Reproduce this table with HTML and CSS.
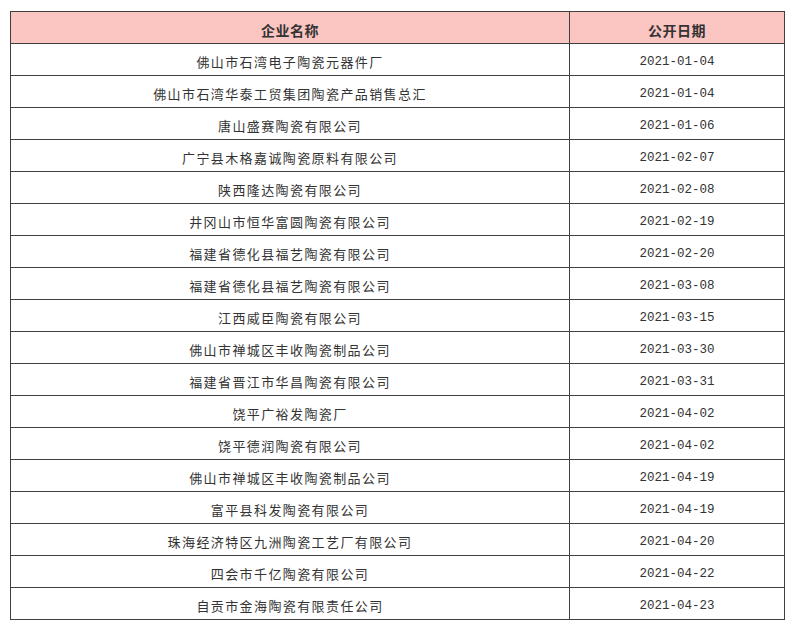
FILE: index.html
```html
<!DOCTYPE html>
<html lang="zh">
<head>
<meta charset="utf-8">
<link rel="stylesheet" href="styles.css">
</head>
<body>
<table class="list">
  <thead>
    <tr><th class="name">企业名称</th><th class="date">公开日期</th></tr>
  </thead>
  <tbody>
    <tr><td class="name">佛山市石湾电子陶瓷元器件厂</td><td class="date">2021-01-04</td></tr>
    <tr><td class="name">佛山市石湾华泰工贸集团陶瓷产品销售总汇</td><td class="date">2021-01-04</td></tr>
    <tr><td class="name">唐山盛赛陶瓷有限公司</td><td class="date">2021-01-06</td></tr>
    <tr><td class="name">广宁县木格嘉诚陶瓷原料有限公司</td><td class="date">2021-02-07</td></tr>
    <tr><td class="name">陕西隆达陶瓷有限公司</td><td class="date">2021-02-08</td></tr>
    <tr><td class="name">井冈山市恒华富圆陶瓷有限公司</td><td class="date">2021-02-19</td></tr>
    <tr><td class="name">福建省德化县福艺陶瓷有限公司</td><td class="date">2021-02-20</td></tr>
    <tr><td class="name">福建省德化县福艺陶瓷有限公司</td><td class="date">2021-03-08</td></tr>
    <tr><td class="name">江西威臣陶瓷有限公司</td><td class="date">2021-03-15</td></tr>
    <tr><td class="name">佛山市禅城区丰收陶瓷制品公司</td><td class="date">2021-03-30</td></tr>
    <tr><td class="name">福建省晋江市华昌陶瓷有限公司</td><td class="date">2021-03-31</td></tr>
    <tr><td class="name">饶平广裕发陶瓷厂</td><td class="date">2021-04-02</td></tr>
    <tr><td class="name">饶平德润陶瓷有限公司</td><td class="date">2021-04-02</td></tr>
    <tr><td class="name">佛山市禅城区丰收陶瓷制品公司</td><td class="date">2021-04-19</td></tr>
    <tr><td class="name">富平县科发陶瓷有限公司</td><td class="date">2021-04-19</td></tr>
    <tr><td class="name">珠海经济特区九洲陶瓷工艺厂有限公司</td><td class="date">2021-04-20</td></tr>
    <tr><td class="name">四会市千亿陶瓷有限公司</td><td class="date">2021-04-22</td></tr>
    <tr><td class="name">自贡市金海陶瓷有限责任公司</td><td class="date">2021-04-23</td></tr>
  </tbody>
</table>
</body>
</html>
```
FILE: styles.css
```css
html, body {
  margin: 0;
  padding: 0;
  background: #ffffff;
}
body {
  padding: 11px 0 0 10px;
  font-family: "Noto Sans CJK SC", "Noto Sans", sans-serif;
  color: #333333;
}
.list {
  border-collapse: collapse;
  width: 775px;
  table-layout: fixed;
}
.list th,
.list td {
  border: 1px solid #404040;
  height: 27px;
  padding: 4px 0 0 0;
  text-align: center;
  vertical-align: middle;
}
.list th {
  background: #fbc5c1;
  font-size: 14px;
  font-weight: bold;
  letter-spacing: 0.5px;
  color: #333333;
}
.list th.name,
.list td.name {
  width: 558px;
}
.list td.name {
  font-size: 13px;
  letter-spacing: 1.4px;
}
.list td.date {
  font-family: "Liberation Mono", "DejaVu Sans Mono", monospace;
  font-size: 12.5px;
}
```
